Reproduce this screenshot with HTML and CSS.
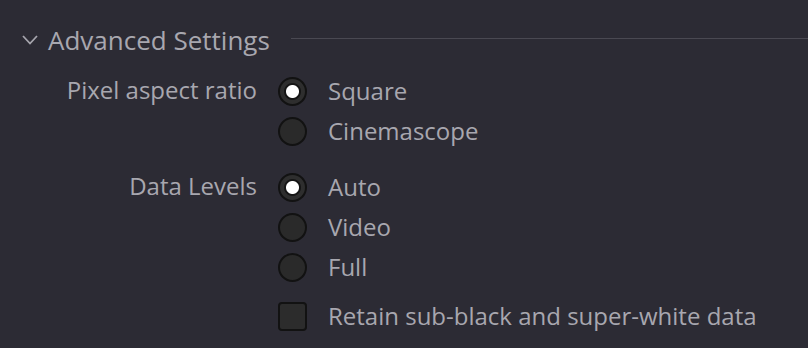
FILE: index.html
```html
<!DOCTYPE html>
<html>
<head>
<meta charset="utf-8">
<link rel="stylesheet" href="styles.css">
</head>
<body>
<div class="panel">
  <div class="header">
    <svg class="chev" width="18" height="12" viewBox="0 0 18 12"><path d="M2 2 L9 9.5 L16 2" fill="none" stroke="#a6a5ad" stroke-width="1.8"/></svg>
    <span class="title">Advanced Settings</span>
    <span class="rule"></span>
  </div>
  <div class="group">
    <div class="label">Pixel aspect ratio</div>
    <div class="options">
      <div class="opt"><span class="radio on"></span><span class="txt">Square</span></div>
      <div class="opt"><span class="radio"></span><span class="txt">Cinemascope</span></div>
    </div>
  </div>
  <div class="group g2">
    <div class="label">Data Levels</div>
    <div class="options">
      <div class="opt"><span class="radio on"></span><span class="txt">Auto</span></div>
      <div class="opt"><span class="radio"></span><span class="txt">Video</span></div>
      <div class="opt"><span class="radio"></span><span class="txt">Full</span></div>
      <div class="opt chk"><span class="box"></span><span class="txt">Retain sub-black and super-white data</span></div>
    </div>
  </div>
</div>
</body>
</html>
```
FILE: styles.css
```css
html, body {
  margin: 0;
  padding: 0;
  background: #2c2b34;
}
body {
  width: 808px;
  height: 348px;
  overflow: hidden;
  font-family: "Open Sans", "Noto Sans", sans-serif;
  color: #a8a7af;
}
.panel {
  padding-top: 22px;
}
.header {
  display: flex;
  align-items: center;
  height: 36px;
}
.chev {
  margin-left: 21px;
  margin-right: 9px;
}
.title {
  font-size: 26px;
  line-height: 36px;
  color: #a8a7af;
}
.rule {
  flex: 1;
  height: 1px;
  background: #4a4952;
  margin-left: 21px;
  margin-top: -4px;
}
.group {
  display: grid;
  grid-template-columns: 257px 1fr;
  column-gap: 21px;
  margin-top: 13px;
}
.g2 {
  margin-top: 16px;
}
.label {
  text-align: right;
  font-size: 24px;
  line-height: 38px;
  height: 38px;
  padding-bottom: 2px;
}
.options {
  display: flex;
  flex-direction: column;
}
.opt {
  display: flex;
  align-items: center;
  height: 40px;
}
.txt {
  font-size: 24px;
  margin-left: 21px;
  padding-bottom: 2px;
}
.radio {
  width: 25px;
  height: 25px;
  border-radius: 50%;
  background: #2a2a2a;
  border: 2px solid #121212;
  flex: none;
}
.radio.on {
  background: radial-gradient(circle at center, #ffffff 0, #ffffff 6px, #151515 7px, #151515 8px, #2e2e2e 9px);
  border-width: 2px;
}
.chk {
  margin-top: 9px;
}
.box {
  width: 25px;
  height: 25px;
  border-radius: 4px;
  background: #2c2c2c;
  border: 2px solid #121212;
  flex: none;
}
```
